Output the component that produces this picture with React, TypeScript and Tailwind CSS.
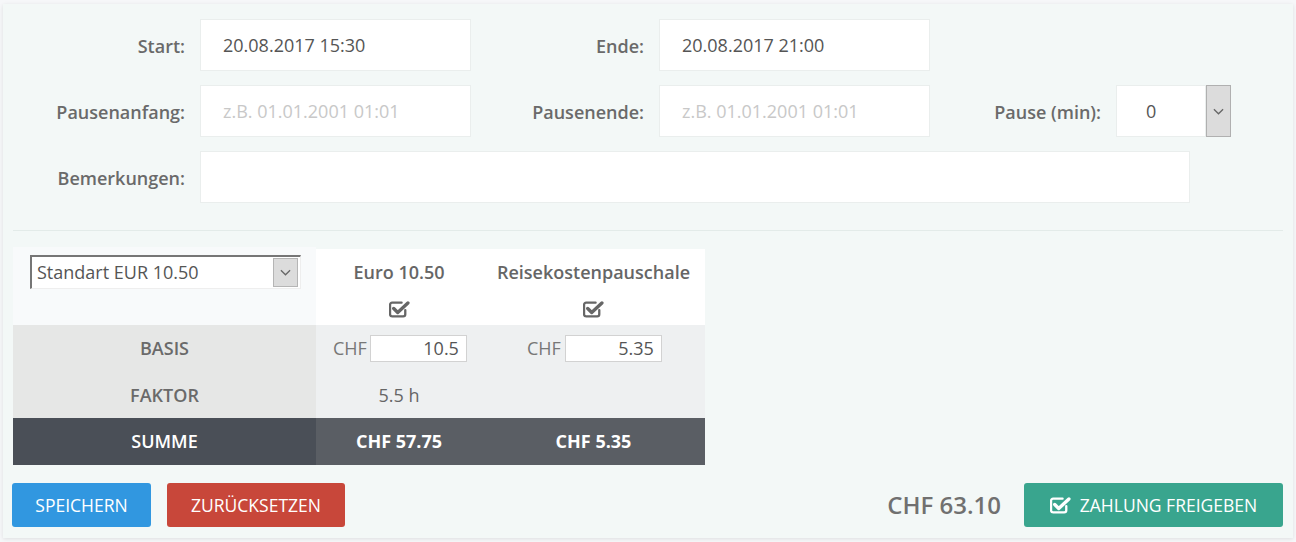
import React from "react";

function CheckIcon({ className = "" }: { className?: string }) {
  // fa-check-square-o style
  return (
    <svg viewBox="0 0 20 17" className={className} fill="none">
      <path
        d="M15.5 9.5V13.5a2 2 0 0 1-2 2H3a2 2 0 0 1-2-2V4.5a2 2 0 0 1 2-2H12"
        stroke="currentColor"
        strokeWidth="2.2"
        strokeLinecap="round"
      />
      <path d="M4.5 8l3.8 3.8L18 2.8" stroke="currentColor" strokeWidth="3.2" strokeLinecap="round" strokeLinejoin="round" />
    </svg>
  );
}

function Chevron() {
  return (
    <svg viewBox="0 0 12 7" className="w-[11px] h-[7px]" fill="none">
      <path d="M1 1l5 5 5-5" stroke="#666" strokeWidth="1.4" />
    </svg>
  );
}

function Field({ value, placeholder, width = "w-[271px]" }: { value?: string; placeholder?: string; width?: string }) {
  return (
    <div className={`${width} h-[52px] bg-white border border-[#eaeeed] flex items-center pl-[22px] text-[18px]`}>
      {value ? <span className="text-[#555]">{value}</span> : <span className="text-[#c8c8c8]">{placeholder}</span>}
    </div>
  );
}

function Label({ text, width }: { text: string; width: string }) {
  return <div className={`${width} shrink-0 text-right font-semibold text-[18px] text-[#6a6a6a] pr-[15px] pt-[3px]`}>{text}</div>;
}

export default function App() {
  return (
    <div className="w-[1296px] h-[542px] bg-[#f6f7f9] pt-[4px] px-[3px] font-['Open_Sans',sans-serif] overflow-hidden">
      <div className="h-[534px] bg-[#f3f8f7] shadow-[0_1px_4px_rgba(0,0,0,0.1)] px-[10px] pt-[15px]">
        {/* form rows */}
        <div className="flex flex-col gap-[14px]">
          <div className="flex items-center">
            <Label text="Start:" width="w-[187px]" />
            <Field value="20.08.2017 15:30" />
            <Label text="Ende:" width="w-[188px]" />
            <Field value="20.08.2017 21:00" />
          </div>
          <div className="flex items-center">
            <Label text="Pausenanfang:" width="w-[187px]" />
            <Field placeholder="z.B. 01.01.2001 01:01" />
            <Label text="Pausenende:" width="w-[188px]" />
            <Field placeholder="z.B. 01.01.2001 01:01" />
            <Label text="Pause (min):" width="w-[186px]" />
            <div className="flex h-[52px]">
              <div className="w-[90px] h-[52px] bg-white border border-[#eaeeed] flex items-center pl-[29px] text-[18px] text-[#555]">0</div>
              <div className="w-[25px] h-[52px] bg-[#dcdcdc] border border-[#b0b0b0] flex items-center justify-center">
                <Chevron />
              </div>
            </div>
          </div>
          <div className="flex items-center">
            <Label text="Bemerkungen:" width="w-[187px]" />
            <div className="w-[990px] h-[52px] bg-white border border-[#eaeeed]" />
          </div>
        </div>

        <div className="mt-[27px] h-px bg-[#e3ebe9]" />

        {/* tariff table */}
        <div className="mt-[16px] grid grid-cols-[303px_166px_223px] text-[18px]">
          <div className="h-[78px] bg-[#f8fafb] pt-[8px] pl-[17px]">
            <div className="w-[271px] h-[34px] bg-white border-t-2 border-l-2 border-[#767676] border-b border-r border-b-[#eee] border-r-[#eee] flex items-center justify-between pl-[5px] pr-[2px]">
              <span className="text-[#555]">Standart EUR 10.50</span>
              <div className="w-[25px] h-[29px] bg-[#dcdcdc] border border-[#b5b5b5] flex items-center justify-center">
                <Chevron />
              </div>
            </div>
          </div>
          <div className="h-[76px] bg-white flex flex-col items-center pt-[10px] mt-[2px]">
            <span className="font-semibold text-[#666]">Euro 10.50</span>
            <CheckIcon className="w-[21px] h-[18px] mt-[14px] text-[#666]" />
          </div>
          <div className="h-[76px] bg-white flex flex-col items-center pt-[10px] mt-[2px]">
            <span className="font-semibold text-[#666]">Reisekostenpauschale</span>
            <CheckIcon className="w-[21px] h-[18px] mt-[14px] text-[#666]" />
          </div>

          <div className="h-[47px] bg-[#e6e7e6] flex items-center justify-center font-semibold text-[#6a6a6a]">BASIS</div>
          <div className="h-[47px] bg-[#eef0f1] flex items-center pl-[17px] text-[#777]">
            CHF
            <div className="ml-[3px] w-[97px] h-[27px] bg-white border border-[#d2d2d2] text-right pr-[7px] leading-[25px] text-[#555]">10.5</div>
          </div>
          <div className="h-[47px] bg-[#eef0f1] flex items-center pl-[45px] text-[#777]">
            CHF
            <div className="ml-[4px] w-[97px] h-[27px] bg-white border border-[#d2d2d2] text-right pr-[7px] leading-[25px] text-[#555]">5.35</div>
          </div>

          <div className="h-[46px] bg-[#e6e7e6] flex items-center justify-center font-semibold text-[#6a6a6a]">FAKTOR</div>
          <div className="h-[46px] bg-[#eef0f1] flex items-center justify-center text-[#666]">5.5 h</div>
          <div className="h-[46px] bg-[#eef0f1]" />

          <div className="h-[47px] bg-[#4a4f57] flex items-center justify-center font-semibold text-white">SUMME</div>
          <div className="h-[47px] bg-[#5a5e64] flex items-center justify-center font-bold text-white">CHF 57.75</div>
          <div className="h-[47px] bg-[#5a5e64] flex items-center justify-center font-bold text-white">CHF 5.35</div>
        </div>

        {/* actions */}
        <div className="mt-[18px] flex items-center">
          <button className="w-[139px] h-[44px] rounded-[3px] bg-[#3197e0] text-white text-[17.5px] ml-[-1px]">SPEICHERN</button>
          <button className="ml-[16px] w-[178px] h-[44px] rounded-[3px] bg-[#c8473a] text-white text-[17.5px]">ZURÜCKSETZEN</button>
          <div className="ml-auto text-[24px] font-semibold text-[#707070] mr-[23px]">CHF 63.10</div>
          <button className="w-[259px] h-[44px] rounded-[3px] bg-[#39a58e] text-white text-[17.5px] flex items-center justify-center gap-[9px]">
            <CheckIcon className="w-[21px] h-[18px] text-white" />
            ZAHLUNG FREIGEBEN
          </button>
        </div>
      </div>
    </div>
  );
}
